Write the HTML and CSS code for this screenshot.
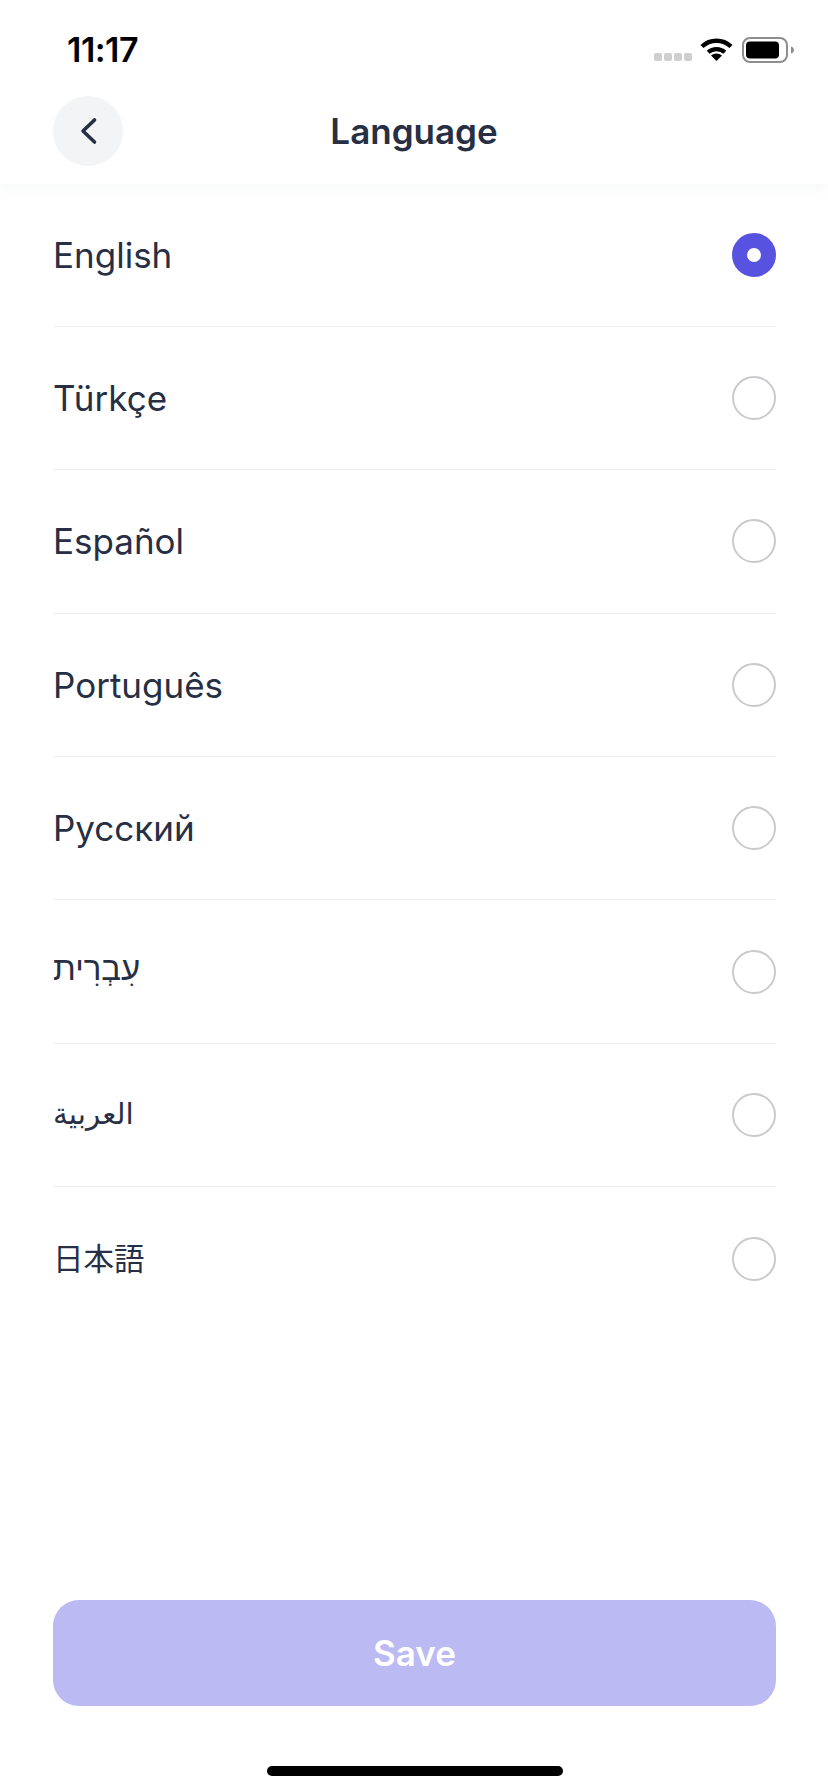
FILE: index.html
```html
<!DOCTYPE html>
<html lang="en">
<head>
    <meta charset="UTF-8">
    <meta name="viewport" content="width=device-width, initial-scale=1.0">
    <title>Language</title>
    <link rel="stylesheet" href="styles.css">
</head>
<body>
    <div class="screen">
        <div class="status-bar">
            <span class="time">11:17</span>
            <div class="status-icons">
                <div class="signal"><i></i><i></i><i></i><i></i></div>
                <svg class="wifi" width="33" height="24" viewBox="0 0 33 24">
                    <path d="M2 9.5A21 21 0 0 1 31 9.5" fill="none" stroke="#000" stroke-width="4.4"/>
                    <path d="M8.2 15.2A12.5 12.5 0 0 1 24.8 15.2" fill="none" stroke="#000" stroke-width="4.2"/>
                    <path d="M16.5 24L11 18.6A8 8 0 0 1 22 18.6Z" fill="#000"/>
                </svg>
                <svg class="battery" width="52" height="26" viewBox="0 0 52 26">
                    <rect x="1" y="1" width="44" height="24" rx="7" fill="none" stroke="#8e8e90" stroke-width="2"/>
                    <rect x="4" y="4.5" width="33" height="17" rx="4" fill="#000"/>
                    <path d="M49 9.5C51 10 52 11.5 52 13S51 16 49 16.5Z" fill="#8e8e90"/>
                </svg>
            </div>
        </div>

        <header class="nav">
            <button class="back" type="button" aria-label="Back">
                <svg width="20" height="28" viewBox="0 0 20 28">
                    <path d="M16.5 3L5 14L16.5 25" fill="none" stroke="#272f45" stroke-width="3.6" stroke-linecap="round" stroke-linejoin="round"/>
                </svg>
            </button>
            <h1>Language</h1>
        </header>

        <ul class="languages">
            <li class="language"><span>English</span><span class="radio selected"></span></li>
            <li class="language"><span>Türkçe</span><span class="radio"></span></li>
            <li class="language"><span>Español</span><span class="radio"></span></li>
            <li class="language"><span>Português</span><span class="radio"></span></li>
            <li class="language"><span>Русский</span><span class="radio"></span></li>
            <li class="language"><span lang="he" dir="rtl" class="hebrew">עִבְרִית</span><span class="radio"></span></li>
            <li class="language"><span lang="ar" dir="rtl" class="arabic">العربية</span><span class="radio"></span></li>
            <li class="language"><span lang="ja" class="japanese">日本語</span><span class="radio"></span></li>
        </ul>

        <div class="footer">
            <button class="save" type="button">Save</button>
            <div class="home-bar"></div>
        </div>
    </div>
</body>
</html>
```

FILE: styles.css
```css
* {
    box-sizing: border-box;
}
body {
    margin: 0;
    background: #fff;
    font-family: Inter, "Noto Sans CJK JP", "DejaVu Sans", sans-serif;
    color: #272f45;
}
.screen {
    width: 828px;
    height: 1792px;
    display: flex;
    flex-direction: column;
    overflow: hidden;
}
.status-bar {
    height: 96px;
    padding: 36px 34px 0 67px;
    display: flex;
    justify-content: space-between;
    align-items: flex-start;
}
.time {
    font-size: 34px;
    line-height: 28px;
    font-weight: 600;
    color: #000;
    letter-spacing: -0.5px;
}
.status-icons {
    display: flex;
    align-items: flex-start;
    padding-top: 1px;
}
.signal {
    display: flex;
    gap: 2px;
    margin: 16px 8px 0 0;
}
.signal i {
    width: 8px;
    height: 8px;
    border-radius: 2px;
    background: #cfcfcf;
}
.wifi {
    margin-right: 9px;
}
.nav {
    height: 87.5px;
    padding: 0 53px 18px;
    display: flex;
    align-items: center;
    justify-content: center;
    position: relative;
    box-shadow: 0 6px 14px rgba(39, 47, 69, 0.035);
}
.nav h1 {
    margin: 0;
    font-size: 35px;
    font-weight: 600;
    line-height: 42px;
}
.back {
    position: absolute;
    left: 53px;
    top: 0;
    width: 70px;
    height: 70px;
    padding: 0;
    border: none;
    border-radius: 50%;
    background: #f2f4f6;
    display: flex;
    align-items: center;
    justify-content: center;
}
.languages {
    list-style: none;
    margin: 0;
    padding: 0 52px 0 53px;
}
.language {
    height: 143.4px;
    display: flex;
    align-items: center;
    justify-content: space-between;
    border-bottom: 1.5px solid #eeeff1;
    font-size: 35px;
    line-height: 42px;
}
.language:last-child {
    border-bottom: none;
}
.hebrew {
    font-family: "Liberation Sans", sans-serif;
    font-size: 33px;
    padding-bottom: 6px;
}
.arabic {
    font-size: 29.5px;
    padding-bottom: 4px;
}
.japanese {
    font-size: 30.5px;
}
.radio {
    width: 44px;
    height: 44px;
    border-radius: 50%;
    border: 2px solid #c9cacd;
    flex-shrink: 0;
}
.radio.selected {
    border: 15px solid #5753e0;
    background: #fff;
}
.footer {
    margin-top: auto;
    padding: 0 52px 0 53px;
    display: flex;
    flex-direction: column;
    align-items: center;
}
.save {
    width: 100%;
    height: 106px;
    border: none;
    border-radius: 26px;
    background: #bcbaf2;
    color: #fff;
    font-family: Inter, sans-serif;
    font-size: 35px;
    font-weight: 600;
}
.home-bar {
    width: 296px;
    height: 10px;
    margin: 60px 0 16px;
    border-radius: 5px;
    background: #000;
}
```
